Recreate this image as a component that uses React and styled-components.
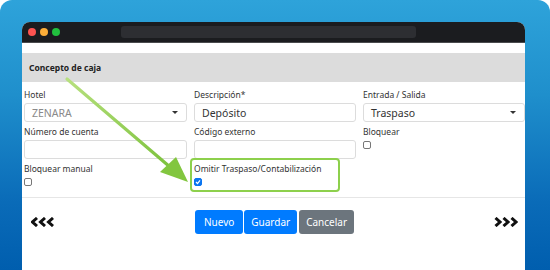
import React from 'react'
import styled, { createGlobalStyle } from 'styled-components'

const Global = createGlobalStyle`
  html, body { margin: 0; padding: 0; background: #fff; }
  body { font-family: "Noto Sans", "Open Sans", sans-serif; }
`

const Frame = styled.div`
  position: relative;
  width: 550px;
  height: 270px;
  box-sizing: border-box;
  padding: 22px 25px 0 22px;
  border-radius: 12px 12px 0 0;
  background: linear-gradient(180deg, #2ea3da 0%, #1f8fcc 35%, #0a6bb8 75%, #005eae 100%);
  overflow: hidden;
`

const Window = styled.div`
  height: 248px;
  background: #fff;
  border-radius: 8px 8px 0 0;
  overflow: hidden;
  display: flex;
  flex-direction: column;
`

const TitleBar = styled.div`
  height: 20px;
  background: #1b1c1f;
  border-bottom: 1px solid #4a4b4e;
  display: flex;
  align-items: center;
  padding-left: 6px;
`

const Dot = styled.span`
  width: 8px;
  height: 8px;
  border-radius: 50%;
  background: ${p => p.color};
  margin-right: 4px;
`

const UrlBar = styled.div`
  margin-left: 57px;
  width: 295px;
  height: 12px;
  border-radius: 3px;
  background: #2d2e32;
`

const Spacer = styled.div`
  height: 10px;
`

const Header = styled.div`
  height: 29px;
  background: #dcdcdc;
  display: flex;
  align-items: center;
  padding-left: 7px;
  font-size: 8.5px;
  font-weight: 700;
  color: #222;
`

const Form = styled.div`
  display: grid;
  grid-template-columns: 163px 162px 162px;
  column-gap: 7px;
  padding: 7px 2px 0 2px;
`

const Field = styled.div`
  display: flex;
  flex-direction: column;
  height: ${p => p.h || 37}px;
  ${p => p.highlight && `
    margin: -5px 0 0 -4px;
    padding: 3px 0 0 2px;
    width: 144px;
    height: 27px;
    border: 2px solid #8dd04c;
    border-radius: 4px;
  `}
`

const Label = styled.label`
  font-size: 8.5px;
  color: #333;
  line-height: 12px;
  white-space: nowrap;
`

const Input = styled.div`
  margin-top: 2px;
  height: 19px;
  box-sizing: border-box;
  border: 1px solid #dcdcdc;
  border-radius: 3px;
  display: flex;
  align-items: center;
  justify-content: space-between;
  padding: 0 8px 0 7px;
  font-size: 10.5px;
  color: ${p => (p.muted ? '#8a8a8a' : '#333')};
`

const Caret = styled.span`
  width: 0;
  height: 0;
  border-left: 3px solid transparent;
  border-right: 3px solid transparent;
  border-top: 3px solid #333;
`

const Check = styled.span`
  margin-top: 3px;
  width: 8px;
  height: 8px;
  box-sizing: border-box;
  border-radius: 2px;
  border: 1px solid ${p => (p.checked ? '#0a75f0' : '#777')};
  background: ${p => (p.checked ? '#0a75f0' : '#fff')};
  display: flex;
  align-items: center;
  justify-content: center;
`

const Divider = styled.div`
  margin-top: 5px;
  border-top: 1px solid #e6e6e6;
`

const Footer = styled.div`
  display: flex;
  align-items: center;
  justify-content: space-between;
  padding: 12px 7px 0 9px;
`

const Buttons = styled.div`
  display: flex;
  gap: 1px;
`

const Btn = styled.button`
  height: 24px;
  padding: 0 ${p => p.px || 7}px;
  border: none;
  border-radius: 3px;
  background: ${p => (p.gray ? '#6c757d' : '#007bff')};
  color: #fff;
  font-family: "Noto Sans", "Open Sans", sans-serif;
  font-size: 10px;
  margin-left: ${p => p.ml || 0}px;
`

const Arrow = styled.svg`
  position: absolute;
  left: 0;
  top: 0;
  pointer-events: none;
`

function Chevrons({ dir }) {
  const pts = [0, 8, 16].map(o =>
    dir === 'left'
      ? `${o + 6},1 ${o + 1.5},5 ${o + 6},9`
      : `${o + 1.5},1 ${o + 6},5 ${o + 1.5},9`
  )
  return (
    <svg width="24" height="10" viewBox="0 0 24 10">
      {pts.map((p, i) => (
        <polyline key={i} points={p} fill="none" stroke="#111" strokeWidth="3" />
      ))}
    </svg>
  )
}

export default function App() {
  return (
    <Frame>
      <Global />
      <Window>
        <TitleBar>
          <Dot color="#fd5350" />
          <Dot color="#fdae39" />
          <Dot color="#21c03e" />
          <UrlBar />
        </TitleBar>
        <Spacer />
        <Header>Concepto de caja</Header>
        <Form>
          <Field>
            <Label>Hotel</Label>
            <Input muted>ZENARA<Caret /></Input>
          </Field>
          <Field>
            <Label>Descripción*</Label>
            <Input>Depósito</Input>
          </Field>
          <Field>
            <Label>Entrada / Salida</Label>
            <Input>Traspaso<Caret /></Input>
          </Field>
          <Field>
            <Label>Número de cuenta</Label>
            <Input />
          </Field>
          <Field>
            <Label>Código externo</Label>
            <Input />
          </Field>
          <Field>
            <Label>Bloquear</Label>
            <Check />
          </Field>
          <Field h={26}>
            <Label>Bloquear manual</Label>
            <Check />
          </Field>
          <Field highlight>
            <Label>Omitir Traspaso/Contabilización</Label>
            <Check checked>
              <svg width="6" height="6" viewBox="0 0 6 6">
                <polyline points="1,3 2.5,4.5 5,1.3" fill="none" stroke="#fff" strokeWidth="1.2" />
              </svg>
            </Check>
          </Field>
        </Form>
        <Divider />
        <Footer>
          <Chevrons dir="left" />
          <Buttons>
            <Btn px={9}>Nuevo</Btn>
            <Btn>Guardar</Btn>
            <Btn gray ml={1}>Cancelar</Btn>
          </Buttons>
          <Chevrons dir="right" />
        </Footer>
      </Window>
      <Arrow width="550" height="270" viewBox="0 0 550 270">
        <defs>
          <linearGradient id="g" x1="0" y1="0" x2="1" y2="1">
            <stop offset="0" stopColor="#b7e07e" />
            <stop offset="1" stopColor="#7cc23c" />
          </linearGradient>
        </defs>
        <path d="M67 79 L170 167" stroke="url(#g)" strokeWidth="3.2" strokeLinecap="round" fill="none" />
        <polygon points="188,182 160,172 176,157" fill="#82c63f" />
      </Arrow>
    </Frame>
  )
}
